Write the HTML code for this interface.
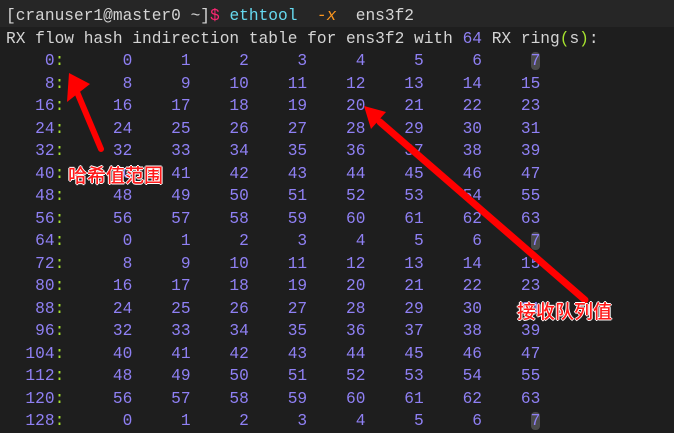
<!DOCTYPE html>
<html><head><meta charset="utf-8"><style>
html,body{margin:0;padding:0;background:#1e1e1e;width:674px;height:432px;overflow:hidden}
.band{position:absolute;left:0;top:0;width:674px;height:27px;background:#262626}
pre{position:absolute;left:6px;top:5px;margin:0;font-family:"Liberation Mono",monospace;font-size:16.2px;line-height:22.5px;color:#d4d4d4}
.n{color:#8f80f4}.c{color:#a6e22e}.p{color:#f92672}.e{color:#66d9ef}.o{color:#fd971f;font-style:italic}
.hl{background:#4a4a4a;border-radius:4px;color:#8f80f4}
svg{position:absolute;left:0;top:0}
.lbl{position:absolute;font-family:"Noto Sans CJK SC",sans-serif;font-size:19px;font-weight:500;color:#ff1a1a;text-shadow:1px 0 #fff,-1px 0 #fff,0 1px #fff,0 -1px #fff;line-height:20px}
</style></head><body>
<div class="band"></div>
<pre>[cranuser1@master0 ~]<span class="p">$</span> <span class="e">ethtool</span>  <span class="o">-x</span>  ens3f2
RX flow hash indirection table for ens3f2 with <span class="n">64</span> RX ring<span class="c">(</span>s<span class="c">)</span>:
<span class="n">    0</span><span class="c">:</span><span class="n">      0     1     2     3     4     5     6     <span class="hl">7</span></span>
<span class="n">    8</span><span class="c">:</span><span class="n">      8     9    10    11    12    13    14    15</span>
<span class="n">   16</span><span class="c">:</span><span class="n">     16    17    18    19    20    21    22    23</span>
<span class="n">   24</span><span class="c">:</span><span class="n">     24    25    26    27    28    29    30    31</span>
<span class="n">   32</span><span class="c">:</span><span class="n">     32    33    34    35    36    37    38    39</span>
<span class="n">   40</span><span class="c">:</span><span class="n">     40    41    42    43    44    45    46    47</span>
<span class="n">   48</span><span class="c">:</span><span class="n">     48    49    50    51    52    53    54    55</span>
<span class="n">   56</span><span class="c">:</span><span class="n">     56    57    58    59    60    61    62    63</span>
<span class="n">   64</span><span class="c">:</span><span class="n">      0     1     2     3     4     5     6     <span class="hl">7</span></span>
<span class="n">   72</span><span class="c">:</span><span class="n">      8     9    10    11    12    13    14    15</span>
<span class="n">   80</span><span class="c">:</span><span class="n">     16    17    18    19    20    21    22    23</span>
<span class="n">   88</span><span class="c">:</span><span class="n">     24    25    26    27    28    29    30    31</span>
<span class="n">   96</span><span class="c">:</span><span class="n">     32    33    34    35    36    37    38    39</span>
<span class="n">  104</span><span class="c">:</span><span class="n">     40    41    42    43    44    45    46    47</span>
<span class="n">  112</span><span class="c">:</span><span class="n">     48    49    50    51    52    53    54    55</span>
<span class="n">  120</span><span class="c">:</span><span class="n">     56    57    58    59    60    61    62    63</span>
<span class="n">  128</span><span class="c">:</span><span class="n">      0     1     2     3     4     5     6     <span class="hl">7</span></span></pre>
<svg width="674" height="432">
<line x1="101" y1="149" x2="77" y2="92" stroke="#ff0000" stroke-width="6" stroke-linecap="round"/>
<polygon points="69,73 67,102 90,84" fill="#ff0000"/>
<line x1="585" y1="300" x2="380" y2="122" stroke="#ff0000" stroke-width="7" stroke-linecap="round"/>
<polygon points="364,106 371,129 386,112" fill="#ff0000"/>
</svg>
<div class="lbl" style="left:68px;top:165px">哈希值范围</div>
<div class="lbl" style="left:517px;top:301px">接收队列值</div>
</body></html>
